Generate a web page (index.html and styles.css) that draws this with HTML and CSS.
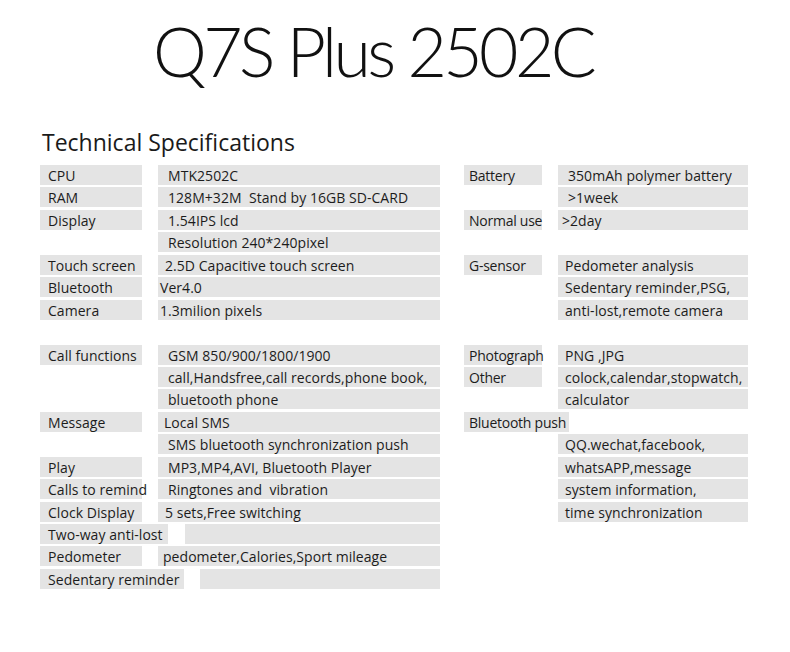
FILE: index.html
```html
<!DOCTYPE html>
<html>
<head>
<meta charset="utf-8">
<link rel="stylesheet" href="styles.css">
</head>
<body>
<h1 class="title">Q7S Plus 2502C</h1>
<h2 class="heading">Technical Specifications</h2>
<div class="specs">
  <div class="col left">
    <div class="row"><span class="lab">CPU</span><span class="val">MTK2502C</span></div>
    <div class="row"><span class="lab">RAM</span><span class="val">128M+32M&nbsp; Stand by 16GB SD-CARD</span></div>
    <div class="row"><span class="lab">Display</span><span class="val">1.54IPS lcd</span></div>
    <div class="row"><span class="lab empty"></span><span class="val">Resolution 240*240pixel</span></div>
    <div class="row"><span class="lab">Touch screen</span><span class="val p7">2.5D Capacitive touch screen</span></div>
    <div class="row"><span class="lab">Bluetooth</span><span class="val p2">Ver4.0</span></div>
    <div class="row"><span class="lab">Camera</span><span class="val p2">1.3milion pixels</span></div>
    <div class="row blank"></div>
    <div class="row"><span class="lab">Call functions</span><span class="val">GSM 850/900/1800/1900</span></div>
    <div class="row"><span class="lab empty"></span><span class="val">call,Handsfree,call records,phone book,</span></div>
    <div class="row"><span class="lab empty"></span><span class="val">bluetooth phone</span></div>
    <div class="row"><span class="lab">Message</span><span class="val p6">Local SMS</span></div>
    <div class="row"><span class="lab empty"></span><span class="val">SMS bluetooth synchronization push</span></div>
    <div class="row"><span class="lab">Play</span><span class="val">MP3,MP4,AVI, Bluetooth Player</span></div>
    <div class="row"><span class="lab">Calls to remind</span><span class="val p10">Ringtones and&nbsp; vibration</span></div>
    <div class="row"><span class="lab">Clock Display</span><span class="val p7">5 sets,Free switching</span></div>
    <div class="row"><span class="lab wide1">Two-way anti-lost</span><span class="val"></span></div>
    <div class="row"><span class="lab">Pedometer</span><span class="val p5">pedometer,Calories,Sport mileage</span></div>
    <div class="row"><span class="lab wide2">Sedentary reminder</span><span class="val"></span></div>
  </div>
  <div class="col right">
    <div class="row"><span class="lab">Battery</span><span class="val">350mAh polymer battery</span></div>
    <div class="row"><span class="lab empty"></span><span class="val">&gt;1week</span></div>
    <div class="row"><span class="lab">Normal use</span><span class="val p4">&gt;2day</span></div>
    <div class="row blank"></div>
    <div class="row"><span class="lab">G-sensor</span><span class="val p7">Pedometer analysis</span></div>
    <div class="row"><span class="lab empty"></span><span class="val p7">Sedentary reminder,PSG,</span></div>
    <div class="row"><span class="lab empty"></span><span class="val p7">anti-lost,remote camera</span></div>
    <div class="row blank"></div>
    <div class="row"><span class="lab">Photograph</span><span class="val p7">PNG ,JPG</span></div>
    <div class="row"><span class="lab">Other</span><span class="val p7">colock,calendar,stopwatch,</span></div>
    <div class="row"><span class="lab empty"></span><span class="val p7">calculator</span></div>
    <div class="row"><span class="lab wide3">Bluetooth push</span></div>
    <div class="row"><span class="lab empty"></span><span class="val p7">QQ.wechat,facebook,</span></div>
    <div class="row"><span class="lab empty"></span><span class="val p7">whatsAPP,message</span></div>
    <div class="row"><span class="lab empty"></span><span class="val p7">system information,</span></div>
    <div class="row"><span class="lab empty"></span><span class="val p7">time synchronization</span></div>
  </div>
</div>
</body>
</html>
```

FILE: styles.css
```css
html, body {
  margin: 0;
  padding: 0;
  background: #ffffff;
}
body {
  width: 790px;
  height: 652px;
  overflow: hidden;
  font-family: "Open Sans", "Noto Sans", sans-serif;
  color: #1c1c1c;
}
.title {
  margin: 0;
  padding: 8px 0 0 153px;
  height: 88px;
  font-family: "Lato", "Open Sans", sans-serif;
  font-size: 68px;
  line-height: 86px;
  font-weight: 300;
  color: #111;
  letter-spacing: -3.6px;
}
.heading {
  margin: 0;
  padding: 0 0 0 42px;
  margin-top: 32px;
  height: 37px;
  font-size: 23px;
  line-height: 28px;
  font-weight: 400;
  color: #1a1a1a;
}
.specs {
  display: flex;
  padding-left: 40px;
  gap: 24px;
}
.col {
  display: flex;
  flex-direction: column;
  gap: 2.45px;
}
.left { width: 400px; }
.right { width: 284px; }
.row {
  display: flex;
  height: 20px;
  gap: 16px;
  font-size: 14px;
  line-height: 21px;
  white-space: nowrap;
  letter-spacing: 0.05px;
}
.lab, .val {
  background: #e4e4e4;
  display: block;
  height: 20px;
}
.lab { padding-left: 8px; box-sizing: border-box; }
.left .lab { width: 102px; flex: none; }
.left .val { flex: 1; padding-left: 10px; }
.right .lab { width: 78px; flex: none; padding-left: 5px; letter-spacing: -0.25px; }
.right .val { width: 190px; flex: none; box-sizing: border-box; padding-left: 10px; }
.lab.empty { background: transparent; }
.left .lab.wide1 { width: 128px; }
.left .lab.wide1 + .val { margin-left: 1px; }
.left .lab.wide2 { width: 144px; }
.right .lab.wide3 { width: 105px; }
.val.p2 { padding-left: 2px; }
.val.p4 { padding-left: 4px; }
.val.p5 { padding-left: 5px; }
.val.p6 { padding-left: 6px; }
.val.p7 { padding-left: 7px; }
.val.p10 { padding-left: 10px; }
```
